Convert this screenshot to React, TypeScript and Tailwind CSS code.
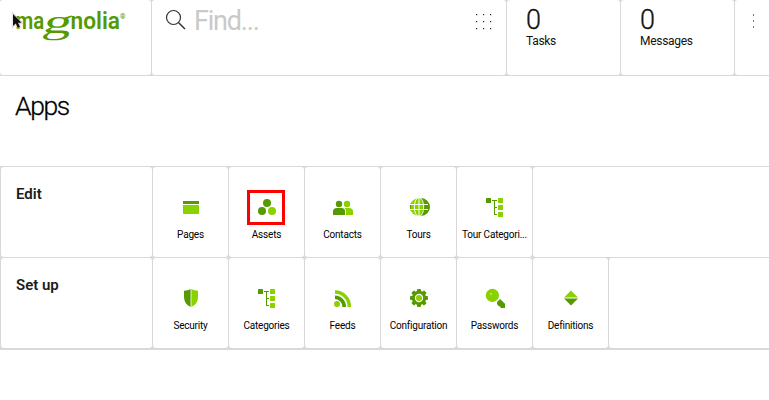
import React from "react";

const DARK = "#549a00";
const LIME = "#8ad100";

const Svg = ({ dx = 0, children }: { dx?: number; children: React.ReactNode }) => (
  <svg width="24" height="24" viewBox="0 0 24 24" className="block shrink-0 overflow-visible">
    <g transform={`translate(${dx} 0)`}>{children}</g>
  </svg>
);

const PagesIcon = () => (
  <Svg dx={1}>
    <path d="M4 6h16v3H4z" fill={DARK} />
    <path d="M4 10h16v8.300q0 .7-.7.7H4.700q-.7 0-.7-.7z" fill={LIME} />
  </Svg>
);

const AssetsIcon = () => (
  <Svg dx={1}>
    <circle cx="12" cy="8" r="4" fill={DARK} />
    <circle cx="7" cy="16" r="4" fill={DARK} />
    <circle cx="17" cy="16" r="4" fill={LIME} />
  </Svg>
);

const ContactsIcon = () => (
  <Svg>
    <circle cx="9" cy="9" r="3.200" fill={DARK} />
    <circle cx="17" cy="9" r="3.200" fill={LIME} />
    <path d="M3 20v-3.500q0-3.500 4-3.500h4.500q3.500 0 3.500 3.500V20z" fill={DARK} />
    <path d="M14.500 13H19q4 0 4 3.500V20h-7v-3.500q0-2.300-1.500-3.500z" fill={LIME} />
  </Svg>
);

const ToursIcon = () => (
  <Svg dx={1}>
    <circle cx="12" cy="12" r="9" fill={LIME} />
    <path d="M14 3a9 9 0 0 1 0 18q4-9 0-18z" fill={DARK} />
    <path d="M4.500 7A9 9 0 0 0 4.500 17Q3 12 4.500 7z" fill={DARK} />
    <g fill="none" stroke="#fff" strokeWidth="1">
      <path d="M12 3v18M3 9.500h18M3 14.500h18" />
      <ellipse cx="12" cy="12" rx="4.700" ry="9.500" />
    </g>
  </Svg>
);

const TreeIcon = () => (
  <Svg dx={2}>
    <rect x="2" y="3" width="5" height="5" rx=".6" fill={DARK} />
    <path d="M8 5.500h5M10.500 5.500v14M10 12.500h3M10 19.500h3" fill="none" stroke={DARK} />
    <rect x="14" y="3" width="5" height="5" rx=".6" fill={LIME} />
    <rect x="14" y="10" width="5" height="5" rx=".6" fill={LIME} />
    <rect x="14" y="17" width="5" height="5" rx=".6" fill={LIME} />
  </Svg>
);

const SecurityIcon = () => (
  <Svg dx={1}>
    <path d="M11.600 3Q9 4.500 5 4.700V11q0 7 6.600 10z" fill={DARK} />
    <path d="M12.400 3Q15 4.500 19 4.700V11q0 7-6.600 10z" fill={LIME} />
  </Svg>
);

const FeedsIcon = () => (
  <Svg>
    <circle cx="7" cy="18" r="3" fill={LIME} />
    <path d="M5 11.200a9.500 9.500 0 0 1 9.200 9.800" fill="none" stroke={DARK} strokeWidth="3.600" />
    <path d="M5 6a14.500 14.500 0 0 1 14.300 15" fill="none" stroke={LIME} strokeWidth="3.400" />
  </Svg>
);

const ConfigIcon = () => (
  <Svg dx={1}>
    <g fill={DARK}>
      <circle cx="12" cy="12" r="7.200" />
      <rect x="10" y="3" width="4" height="18" rx="1" />
      <rect x="3" y="10" width="18" height="4" rx="1" />
      <rect x="10" y="3" width="4" height="18" rx="1" transform="rotate(45 12 12)" />
      <rect x="10" y="3" width="4" height="18" rx="1" transform="rotate(-45 12 12)" />
    </g>
    <circle cx="12" cy="12" r="3.600" fill={LIME} stroke="#fff" strokeWidth="1.200" />
  </Svg>
);

const PasswordsIcon = () => (
  <Svg dx={2}>
    <circle cx="8.400" cy="9.400" r="6.600" fill={LIME} />
    <circle cx="7" cy="8" r="1" fill="#c3e97a" />
    <path d="M16 13l5 4.700V22h-4l-1-1.500-1.500-.5-1.500-2v-2z" fill={DARK} />
  </Svg>
);

const DefinitionsIcon = () => (
  <Svg dx={1}>
    <path d="M12 4.500l7 7H5z" fill={LIME} />
    <path d="M5 12.500h14l-7 7z" fill={DARK} />
  </Svg>
);

type Tile = { label: string; Icon: () => React.ReactElement; marked?: boolean };

const rows: { title: string; apps: Tile[] }[] = [
  {
    title: "Edit",
    apps: [
      { label: "Pages", Icon: PagesIcon },
      { label: "Assets", Icon: AssetsIcon, marked: true },
      { label: "Contacts", Icon: ContactsIcon },
      { label: "Tours", Icon: ToursIcon },
      { label: "Tour Categori...", Icon: TreeIcon },
    ],
  },
  {
    title: "Set up",
    apps: [
      { label: "Security", Icon: SecurityIcon },
      { label: "Categories", Icon: TreeIcon },
      { label: "Feeds", Icon: FeedsIcon },
      { label: "Configuration", Icon: ConfigIcon },
      { label: "Passwords", Icon: PasswordsIcon },
      { label: "Definitions", Icon: DefinitionsIcon },
    ],
  },
];

const Logo = () => (
  <svg width="151" height="75" viewBox="0 0 151 75" className="block">
    <g fill={DARK} fontFamily="Roboto, sans-serif" fontWeight="600" fontSize="23.500">
      <text transform="translate(15.500 29.300) scale(.87 1)">ma</text>
      <text x="70.500" y="29.300" textLength="49.500" lengthAdjust="spacingAndGlyphs">nolia</text>
      <text x="120" y="18.500" fontSize="7">®</text>
    </g>
    <text transform="translate(41.500 33) skewX(-14) scale(1.700 1)" fill={DARK} fontFamily="'Liberation Serif', serif" fontSize="34">g</text>
    <path d="M13 14v12l3-2.500 2 4.500 2-1-2-4.300h3.500z" fill="#999" opacity=".35" stroke="#aaa" strokeWidth="2.500" />
    <path d="M13 14v12l2.800-2.600 2 4.600 2.200-1-2-4.300h3.700z" fill="#111" stroke="#fff" strokeWidth=".8" paintOrder="stroke" />
  </svg>
);

const Counter = ({ label }: { label: string }) => (
  <div className="w-[113px] shrink-0 rounded-[3px] bg-white pl-[19px] pt-[5px] text-[#111]">
    <div className="text-[27px] font-light leading-[30px] [-webkit-text-stroke:0.3px]">0</div>
    <div className="-mt-px text-[12px] leading-[14px] tracking-[-0.3px]">{label}</div>
  </div>
);

export default function App() {
  return (
    <div className="h-[400px] w-[769px] overflow-hidden bg-white font-[Roboto,sans-serif] text-black">
      <header className="flex h-[76px] gap-px bg-[#d9d9d9] pb-px">
        <div className="w-[151px] shrink-0 rounded-[3px] bg-white">
          <Logo />
        </div>
        <div className="flex w-[354px] shrink-0 items-start rounded-[3px] bg-white">
          <svg width="22" height="22" viewBox="0 0 22 22" className="ml-[13px] mt-[9px] shrink-0" fill="none" stroke="#333" strokeWidth="1.200">
            <circle cx="8.500" cy="8.500" r="7" />
            <path d="M13.700 13.700l6.300 6.300" strokeWidth="1.500" />
          </svg>
          <span className="ml-[7px] mt-[5px] flex-1 text-[27px] leading-8 tracking-[-1.2px] text-[#c9c9c9]">Find...</span>
          <svg width="18" height="18" viewBox="0 0 18 18" className="mr-[13px] mt-[13px] shrink-0" fill="#222">
            {[1, 8, 15].map((y) => [1, 8, 15].map((x) => <rect key={`${x}-${y}`} x={x} y={y} width="1.200" height="1.200" />))}
          </svg>
        </div>
        <Counter label="Tasks" />
        <Counter label="Messages" />
        <div className="flex-1 rounded-l-[3px] bg-white">
          <svg width="34" height="40" viewBox="0 0 34 40" fill="#777">
            <path d="M18 14h1v2h-1zM18 20h1v2h-1zM18 26h1v2h-1z" />
          </svg>
        </div>
      </header>
      <h1 className="h-[90px] pl-[15px] pt-[14px] text-[26.5px] font-light leading-8 tracking-[-1.4px] [-webkit-text-stroke:0.3px]">Apps</h1>
      <main className="flex flex-col gap-px bg-[#d9d9d9] pb-[2px] pl-px pt-px">
        {rows.map((row) => (
          <section key={row.title} className="flex h-[90px] gap-px">
            <h2 className="w-[151px] shrink-0 rounded-[3px] bg-white pl-[15px] pt-[17px] text-[15px] font-semibold leading-5 text-[#1c1c1c]">{row.title}</h2>
            {row.apps.map(({ label, Icon, marked }) => (
              <div key={label} className="flex w-[75px] shrink-0 flex-col rounded-[3px] bg-white pt-[23px]">
                <div className={`ml-[18px] flex h-[35px] w-[38px] items-start justify-center border-[3px] pt-[2px] ${marked ? "border-[#ff0000]" : "border-transparent"}`}>
                  <Icon />
                </div>
                <div className="mt-[3px] whitespace-nowrap text-center text-[10px] leading-[14px] tracking-[-0.2px]">{label}</div>
              </div>
            ))}
            <div className="flex-1 rounded-l-[3px] bg-white" />
          </section>
        ))}
      </main>
    </div>
  );
}
